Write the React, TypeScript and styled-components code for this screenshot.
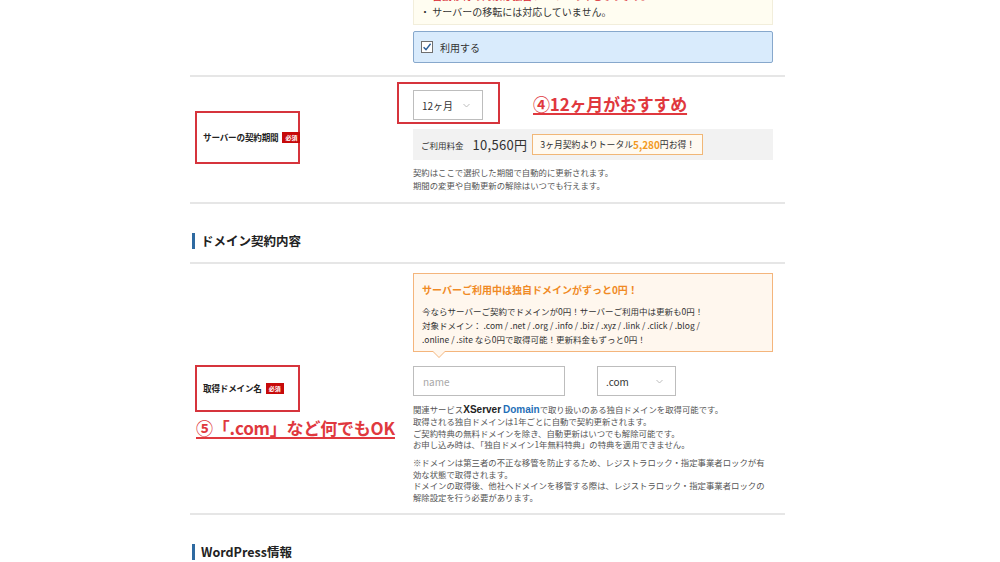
import React from 'react'
import styled, { createGlobalStyle, css } from 'styled-components'

const GlobalStyle = createGlobalStyle`
  html, body {
    margin: 0;
    padding: 0;
    background: #ffffff;
    overflow: hidden;
  }
  body {
    font-family: 'Noto Sans CJK JP', 'Noto Sans', sans-serif;
    color: #333333;
  }
`

const Page = styled.div`
  width: 595px;
  margin-left: 190px;
`

const Row = styled.div<{ $pt?: number; $pb?: number }>(
  ({ $pt = 0, $pb = 0 }) => css`
    display: grid;
    grid-template-columns: 223px 360px;
    border-bottom: 2px solid #e6e6e6;
    padding-top: ${$pt}px;
    padding-bottom: ${$pb}px;
  `,
)

const LabelCell = styled.div`
  position: relative;
  display: flex;
  align-items: center;
  padding-left: 5px;
`

const LabelBox = styled.div<{ $h: number }>(
  ({ $h }) => css`
    box-sizing: border-box;
    width: 105px;
    height: ${$h}px;
    border: 2px solid #d6343c;
    display: flex;
    align-items: center;
    padding-left: 6px;
  `,
)

const Label = styled.span`
  font-size: 8.6px;
  font-weight: 700;
  color: #222222;
  white-space: nowrap;
  letter-spacing: -0.2px;
`

const Badge = styled.span`
  flex-shrink: 0;
  display: inline-block;
  margin-left: 4px;
  background: #c70a0a;
  color: #ffffff;
  font-size: 6px;
  font-weight: 700;
  line-height: 11px;
  padding: 0 3px;
  white-space: nowrap;
`

const Annotation = styled.span`
  color: #e0383e;
  font-size: 17px;
  font-weight: 700;
  text-decoration: underline;
  text-underline-offset: 2px;
  text-decoration-thickness: 1.5px;
  white-space: nowrap;
  letter-spacing: -0.2px;
`

const LeftAnnotation = styled(Annotation)`
  position: absolute;
  left: 6px;
  top: calc(50% + 27px);
`

const RightCell = styled.div`
  display: flex;
  flex-direction: column;
`

const Notice = styled.div`
  margin-top: -15px;
  background: #fffdf1;
  border: 1px solid #f2eedb;
  padding: 2px 8px 4px 6px;
  font-size: 10px;
  line-height: 16px;
  color: #333333;
`

const NoticeWarn = styled.div`
  color: #d8202a;
`

const UseBox = styled.label`
  margin-top: 6px;
  height: 32px;
  box-sizing: border-box;
  display: flex;
  align-items: center;
  gap: 7px;
  padding-left: 7px;
  background: #d9ebfc;
  border: 1px solid #87a8cc;
  border-radius: 2px;
  font-size: 10px;
  color: #333333;
`

const CheckMark = () => (
  <svg width="12" height="12" viewBox="0 0 12 12">
    <rect x="0.5" y="0.5" width="11" height="11" fill="#ffffff" stroke="#6f6f6f" />
    <path d="M2.6 6.2 L5 8.6 L9.6 2.8" fill="none" stroke="#2b5e99" strokeWidth="1.4" />
  </svg>
)

const Chevron = () => (
  <svg width="7" height="5" viewBox="0 0 7 5">
    <path d="M0.5 1 L3.5 4 L6.5 1" fill="none" stroke="#b5b5b5" strokeWidth="0.9" />
  </svg>
)

const SelectLine = styled.div`
  display: flex;
  align-items: center;
  gap: 33px;
`

const Highlight = styled.div`
  margin-left: -16px;
  border: 2px solid #d6343c;
  padding: 6px 15px 2px 14px;
`

const Select = styled.div<{ $w: number }>(
  ({ $w }) => css`
    box-sizing: border-box;
    width: ${$w}px;
    height: 30px;
    border: 1px solid #bdbdbd;
    background: #ffffff;
    display: flex;
    align-items: center;
    justify-content: space-between;
    padding: 0 12px 0 8px;
    font-size: 10px;
    color: #333333;
  `,
)

const PriceBar = styled.div`
  margin-top: 5px;
  height: 31px;
  background: #f2f2f2;
  display: flex;
  align-items: center;
  padding-left: 8px;
`

const PriceLabel = styled.span`
  font-size: 8.5px;
  color: #333333;
`

const PriceValue = styled.span`
  margin-left: 9px;
  font-size: 13px;
  color: #333333;
  letter-spacing: 0.3px;
`

const Deal = styled.span`
  margin-left: 5px;
  height: 21px;
  box-sizing: border-box;
  display: inline-flex;
  align-items: center;
  padding: 0 7px;
  background: #fffaf1;
  border: 1px solid #f1b777;
  font-size: 8.8px;
  color: #333333;
`

const DealNum = styled.b`
  color: #f29a1f;
  font-size: 10px;
`

const Small = styled.div<{ $mt?: number; $lh?: number }>(
  ({ $mt = 0, $lh = 13 }) => css`
    margin-top: ${$mt}px;
    font-size: 8.4px;
    line-height: ${$lh}px;
    color: #555555;
    white-space: nowrap;
  `,
)

const Heading = styled.div<{ $pt: number; $pb: number }>(
  ({ $pt, $pb }) => css`
    padding: ${$pt}px 0 ${$pb}px 2px;
    border-bottom: ${$pb > 0 ? '2px solid #e6e6e6' : 'none'};
  `,
)

const HeadingText = styled.h2`
  margin: 0;
  border-left: 3px solid #2e6aa1;
  padding-left: 6px;
  font-size: 12.5px;
  line-height: 16px;
  font-weight: 700;
  color: #222222;
`

const Callout = styled.div`
  position: relative;
  background: #fff7ee;
  border: 1px solid #f4b57c;
  padding: 9px 8px 5px 8px;
  &::before,
  &::after {
    content: '';
    position: absolute;
    left: 18px;
    width: 0;
    height: 0;
    border-left: 7px solid transparent;
    border-right: 7px solid transparent;
  }
  &::before {
    bottom: -7px;
    border-top: 7px solid #f4b57c;
  }
  &::after {
    bottom: -6px;
    border-top: 7px solid #fff7ee;
  }
`

const CalloutTitle = styled.div`
  font-size: 10px;
  line-height: 13px;
  font-weight: 700;
  color: #f08a25;
  margin-bottom: 8px;
`

const CalloutText = styled.div`
  font-size: 8.5px;
  line-height: 14px;
  color: #333333;
  white-space: nowrap;
`

const InputLine = styled.div`
  margin-top: 14px;
  display: flex;
  gap: 32px;
`

const NameInput = styled.input`
  box-sizing: border-box;
  width: 152px;
  height: 30px;
  border: 1px solid #bdbdbd;
  padding: 0 9px;
  font-family: inherit;
  font-size: 10px;
  outline: none;
  &::placeholder {
    color: #a8a8a8;
  }
`

const Brand = styled.b<{ $blue?: boolean }>(
  ({ $blue }) => css`
    font-family: 'Liberation Sans', Arial, sans-serif;
    font-size: 10px;
    color: ${$blue ? '#1f6fb8' : '#222222'};
  `,
)

export default function App() {
  return (
    <>
      <GlobalStyle />
      <Page>
        <Row $pb={12}>
          <div />
          <RightCell>
            <Notice>
              <NoticeWarn>・ 自動移行の対象は独自ドメインのみとなります。</NoticeWarn>
              <div>・ サーバーの移転には対応していません。</div>
            </Notice>
            <UseBox>
              <CheckMark />
              利用する
            </UseBox>
          </RightCell>
        </Row>

        <Row $pt={5} $pb={10}>
          <LabelCell>
            <LabelBox $h={53}>
              <Label>サーバーの契約期間</Label>
              <Badge>必須</Badge>
            </LabelBox>
          </LabelCell>
          <RightCell>
            <SelectLine>
              <Highlight>
                <Select $w={70}>
                  12ヶ月
                  <Chevron />
                </Select>
              </Highlight>
              <Annotation>④12ヶ月がおすすめ</Annotation>
            </SelectLine>
            <PriceBar>
              <PriceLabel>ご利用料金</PriceLabel>
              <PriceValue>10,560円</PriceValue>
              <Deal>
                3ヶ月契約よりトータル<DealNum>5,280</DealNum>円お得！
              </Deal>
            </PriceBar>
            <Small $mt={6}>
              契約はここで選択した期間で自動的に更新されます。
              <br />
              期間の変更や自動更新の解除はいつでも行えます。
            </Small>
          </RightCell>
        </Row>

        <Heading $pt={29} $pb={13}>
          <HeadingText>ドメイン契約内容</HeadingText>
        </Heading>

        <Row $pt={9} $pb={10}>
          <LabelCell>
            <LabelBox $h={47}>
              <Label>取得ドメイン名</Label>
              <Badge>必須</Badge>
            </LabelBox>
            <LeftAnnotation>⑤「.com」など何でもOK</LeftAnnotation>
          </LabelCell>
          <RightCell>
            <Callout>
              <CalloutTitle>サーバーご利用中は独自ドメインがずっと0円！</CalloutTitle>
              <CalloutText>
                今ならサーバーご契約でドメインが0円！サーバーご利用中は更新も0円！
                <br />
                対象ドメイン： .com / .net / .org / .info / .biz / .xyz / .link / .click / .blog /
                <br />
                .online / .site なら0円で取得可能！更新料金もずっと0円！
              </CalloutText>
            </Callout>
            <InputLine>
              <NameInput placeholder="name" />
              <Select $w={79}>
                .com
                <Chevron />
              </Select>
            </InputLine>
            <Small $mt={8} $lh={11.8}>
              関連サービス<Brand>XServer</Brand> <Brand $blue>Domain</Brand>で取り扱いのある独自ドメインを取得可能です。
              <br />
              取得される独自ドメインは1年ごとに自動で契約更新されます。
              <br />
              ご契約特典の無料ドメインを除き、自動更新はいつでも解除可能です。
              <br />
              お申し込み時は、「独自ドメイン1年無料特典」の特典を適用できません。
            </Small>
            <Small $mt={6} $lh={11.5}>
              ※ドメインは第三者の不正な移管を防止するため、レジストラロック・指定事業者ロックが有
              <br />
              効な状態で取得されます。
              <br />
              ドメインの取得後、他社へドメインを移管する際は、レジストラロック・指定事業者ロックの
              <br />
              解除設定を行う必要があります。
            </Small>
          </RightCell>
        </Row>

        <Heading $pt={29} $pb={0}>
          <HeadingText>WordPress情報</HeadingText>
        </Heading>
      </Page>
    </>
  )
}
